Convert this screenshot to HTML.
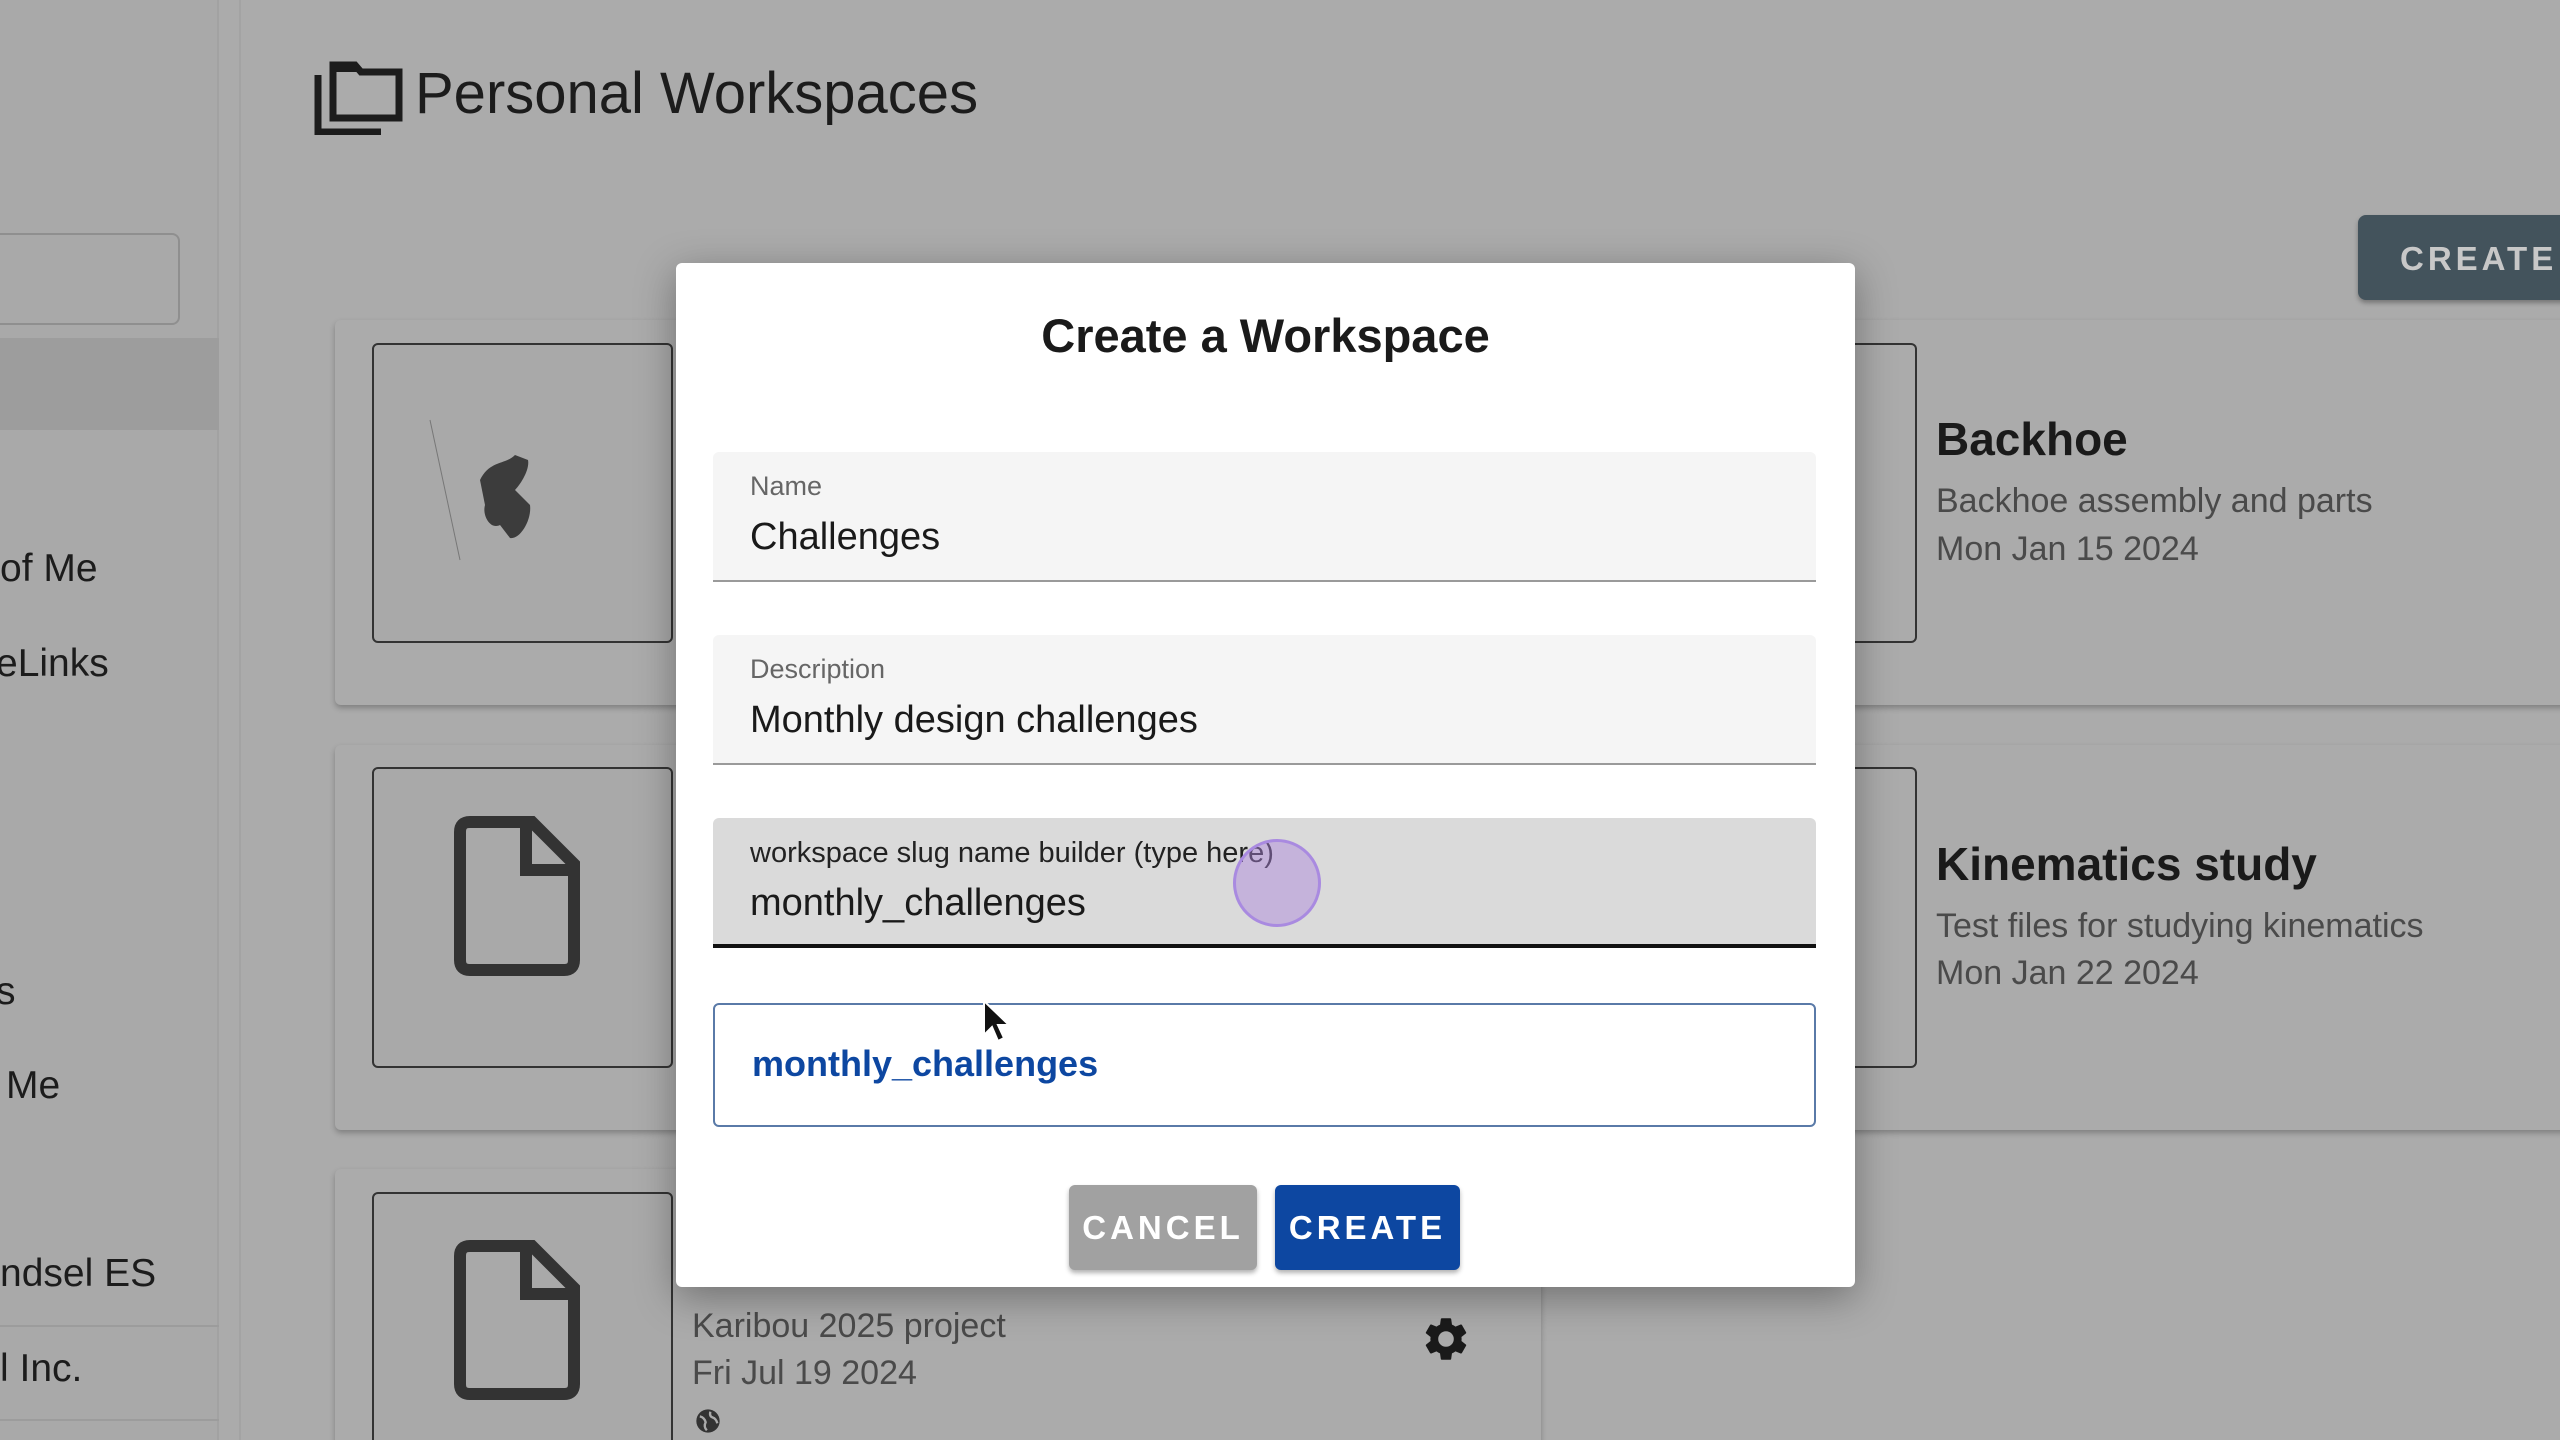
<!DOCTYPE html>
<html style="overflow:hidden;height:1440px"><head><meta charset="utf-8"><style>
*{box-sizing:border-box;margin:0;padding:0}
body{width:2560px;height:1440px;overflow:hidden;background:#ababab;font-family:"Liberation Sans",sans-serif;color:#1a1a1a}
#w{position:relative;width:2560px;height:1440px;overflow:hidden;background:#ababab}
.abs{position:absolute}
.side{left:0;top:0;width:219px;height:1440px;background:#a9a9a9;border-right:2px solid #a2a2a2}
.sideline{left:239px;top:0;width:2px;height:1440px;background:#a3a3a3}
.st{font-size:39px;color:#1c1c1c;left:0;white-space:nowrap}
.card{background:#ababab;border-radius:6px;box-shadow:0 3px 6px rgba(0,0,0,.25)}
.thumb{border:2px solid #333;border-radius:6px;background:#a9a9a9}
.ct{font-size:46px;font-weight:bold;color:#1a1a1a;white-space:nowrap}
.cd{font-size:34px;color:#4a4a4a;white-space:nowrap}
.dlg{left:676px;top:263px;width:1179px;height:1024px;background:#fff;border-radius:6px;box-shadow:0 10px 40px rgba(0,0,0,.35)}
.fld{left:37px;width:1103px;height:130px;background:#f5f5f5;border-radius:6px 6px 0 0;border-bottom:2px solid #9a9a9a}
.lbl{position:absolute;left:37px;top:19px;font-size:27px;color:#666;white-space:nowrap}
.val{position:absolute;left:37px;top:64px;font-size:38px;color:#1a1a1a;white-space:nowrap}
.btn{position:absolute;top:922px;height:85px;border-radius:6px;color:#fff;font-size:33px;font-weight:bold;letter-spacing:4px;display:flex;align-items:center;justify-content:center;box-shadow:0 3px 5px rgba(0,0,0,.3)}
</style></head><body><div id="w">
<div class="abs side"></div>
<div class="abs sideline"></div>
<div class="abs" style="left:-10px;top:233px;width:190px;height:92px;border:2px solid #8f8f8f;border-radius:8px"></div>
<div class="abs" style="left:0;top:338px;width:219px;height:92px;background:#9d9d9d"></div>
<div class="abs st" style="top:547px">of Me</div>
<div class="abs st" style="top:642px;left:-4px">eLinks</div>
<div class="abs st" style="top:970px;left:-4px">s</div>
<div class="abs st" style="top:1064px;left:6px">Me</div>
<div class="abs st" style="top:1252px">ndsel ES</div>
<div class="abs" style="left:0;top:1325px;width:219px;height:2px;background:#9c9c9c"></div>
<div class="abs st" style="top:1347px">l Inc.</div>
<div class="abs" style="left:0;top:1419px;width:219px;height:2px;background:#9c9c9c"></div>

<svg class="abs" style="left:313px;top:60px" width="90" height="75" viewBox="0 0 90 75"><path d="M5 15V72H68" fill="none" stroke="#1c1c1c" stroke-width="7"/><path d="M20 5H42L48 12H86V58H20Z" fill="none" stroke="#1c1c1c" stroke-width="7"/><path d="M20 5H42L48 12H20Z" fill="#1c1c1c"/></svg>
<div class="abs" style="left:415px;top:60px;font-size:58px;color:#1c1c1c">Personal Workspaces</div>

<div class="abs" style="left:2358px;top:215px;width:260px;height:85px;background:#43535c;border-radius:8px;color:#c8c8c8;font-size:33px;font-weight:bold;letter-spacing:4px;padding:25px 0 0 42px;white-space:nowrap;box-shadow:0 3px 5px rgba(0,0,0,.3)">CREATE W</div>

<div class="abs card" style="left:335px;top:320px;width:1206px;height:385px"></div>
<div class="abs card" style="left:1580px;top:320px;width:1000px;height:385px"></div>
<div class="abs card" style="left:335px;top:745px;width:1206px;height:385px"></div>
<div class="abs card" style="left:1580px;top:745px;width:1000px;height:385px"></div>
<div class="abs card" style="left:335px;top:1169px;width:1206px;height:300px"></div>

<div class="abs thumb" style="left:372px;top:343px;width:301px;height:300px"></div>
<svg class="abs" style="left:420px;top:410px" width="150" height="160"><path d="M10 10L40 150" stroke="#777" stroke-width="1"/><path d="M60 70C70 50 85 55 95 45L108 50C110 60 100 75 95 80L110 95C112 110 100 130 90 128L80 115C70 120 62 105 65 95Z" fill="#3c3c3c"/></svg>
<div class="abs thumb" style="left:372px;top:767px;width:301px;height:301px"></div>
<div class="abs thumb" style="left:372px;top:1192px;width:301px;height:300px"></div>
<svg class="abs" style="left:454px;top:816px" width="126" height="160" viewBox="0 0 126 160"><path d="M16 6H78L120 48V144Q120 154 110 154H16Q6 154 6 144V16Q6 6 16 6Z" fill="none" stroke="#333" stroke-width="12"/><path d="M72 6V54H120" fill="none" stroke="#333" stroke-width="12"/></svg>
<svg class="abs" style="left:454px;top:1240px" width="126" height="160" viewBox="0 0 126 160"><path d="M16 6H78L120 48V144Q120 154 110 154H16Q6 154 6 144V16Q6 6 16 6Z" fill="none" stroke="#333" stroke-width="12"/><path d="M72 6V54H120" fill="none" stroke="#333" stroke-width="12"/></svg>
<div class="abs" style="left:1850px;top:343px;width:67px;height:300px;border:2px solid #333;border-left:none;border-radius:0 6px 6px 0"></div>
<div class="abs" style="left:1850px;top:767px;width:67px;height:301px;border:2px solid #333;border-left:none;border-radius:0 6px 6px 0"></div>

<div class="abs ct" style="left:1936px;top:412px">Backhoe</div>
<div class="abs cd" style="left:1936px;top:482px">Backhoe assembly and parts</div>
<div class="abs cd" style="left:1936px;top:530px">Mon Jan 15 2024</div>
<div class="abs ct" style="left:1936px;top:837px">Kinematics study</div>
<div class="abs cd" style="left:1936px;top:907px">Test files for studying kinematics</div>
<div class="abs cd" style="left:1936px;top:954px">Mon Jan 22 2024</div>
<div class="abs cd" style="left:692px;top:1307px">Karibou 2025 project</div>
<div class="abs cd" style="left:692px;top:1354px">Fri Jul 19 2024</div>
<svg class="abs" style="left:694px;top:1407px" width="28" height="28" viewBox="0 0 24 24"><circle cx="12" cy="12" r="10" fill="#333"/><path d="M5 8Q9 9 10 13Q8 17 11 20M14 4Q13 8 16 9Q19 10 20 14" stroke="#aaa" stroke-width="2" fill="none"/></svg>
<svg class="abs" style="left:1420px;top:1313px" width="52" height="52" viewBox="0 0 24 24"><path fill="#1a1a1a" d="M19.14 12.94c.04-.3.06-.61.06-.94 0-.32-.02-.64-.07-.94l2.030-1.580a.49.49 0 0 0 .12-.61l-1.92-3.32a.49.49 0 0 0-.59-.22l-2.39.96c-.5-.38-1.03-.7-1.62-.94l-.36-2.54a.48.48 0 0 0-.48-.41h-3.84c-.24 0-.43.17-.47.41l-.36 2.54c-.59.24-1.13.57-1.62.94l-2.39-.96a.48.48 0 0 0-.59.22L2.74 8.87c-.12.21-.08.47.12.61l2.03 1.58c-.05.3-.09.63-.09.94s.02.64.07.94l-2.03 1.58a.49.49 0 0 0-.12.61l1.92 3.32c.12.22.37.29.59.22l2.39-.96c.5.38 1.03.7 1.62.94l.36 2.54c.05.24.24.41.48.41h3.84c.24 0 .44-.17.47-.41l.36-2.54c.59-.24 1.13-.56 1.62-.94l2.39.96c.22.08.47 0 .59-.22l1.92-3.32c.12-.22.07-.47-.12-.61l-2.01-1.58zM12 15.6A3.6 3.6 0 1 1 12 8.4a3.6 3.6 0 0 1 0 7.2z"/></svg>

<div class="abs dlg">
 <div class="abs" style="left:0;width:100%;top:45px;text-align:center;font-size:47px;font-weight:bold;color:#1a1a1a">Create a Workspace</div>
 <div class="abs fld" style="top:189px"><div class="lbl">Name</div><div class="val">Challenges</div></div>
 <div class="abs fld" style="top:372px"><div class="lbl">Description</div><div class="val">Monthly design challenges</div></div>
 <div class="abs fld" style="top:555px;background:#dadada;border-bottom:4px solid #111"><div class="lbl" style="color:#222;font-size:29px">workspace slug name builder (type here)</div><div class="val">monthly_challenges</div></div>
 <div class="abs" style="left:557px;top:576px;width:88px;height:88px;border-radius:50%;background:rgba(170,130,220,.45);border:3px solid #a98ae0"></div>
 <div class="abs" style="left:37px;top:740px;width:1103px;height:124px;border:2px solid #5a7aa8;border-radius:6px"><div style="position:absolute;left:37px;top:38px;font-size:36px;font-weight:bold;color:#0d47a1">monthly_challenges</div></div>
 <svg class="abs" style="left:306px;top:736px" width="30" height="44" viewBox="0 0 30 44"><path d="M2 2V36L10 28L16 42L22 39L16 26H27Z" fill="#111" stroke="#fff" stroke-width="2"/></svg>
 <div class="btn" style="left:393px;width:188px;background:#a1a1a1">CANCEL</div>
 <div class="btn" style="left:599px;width:185px;background:#0d47a1">CREATE</div>
</div>
</div></body></html>
